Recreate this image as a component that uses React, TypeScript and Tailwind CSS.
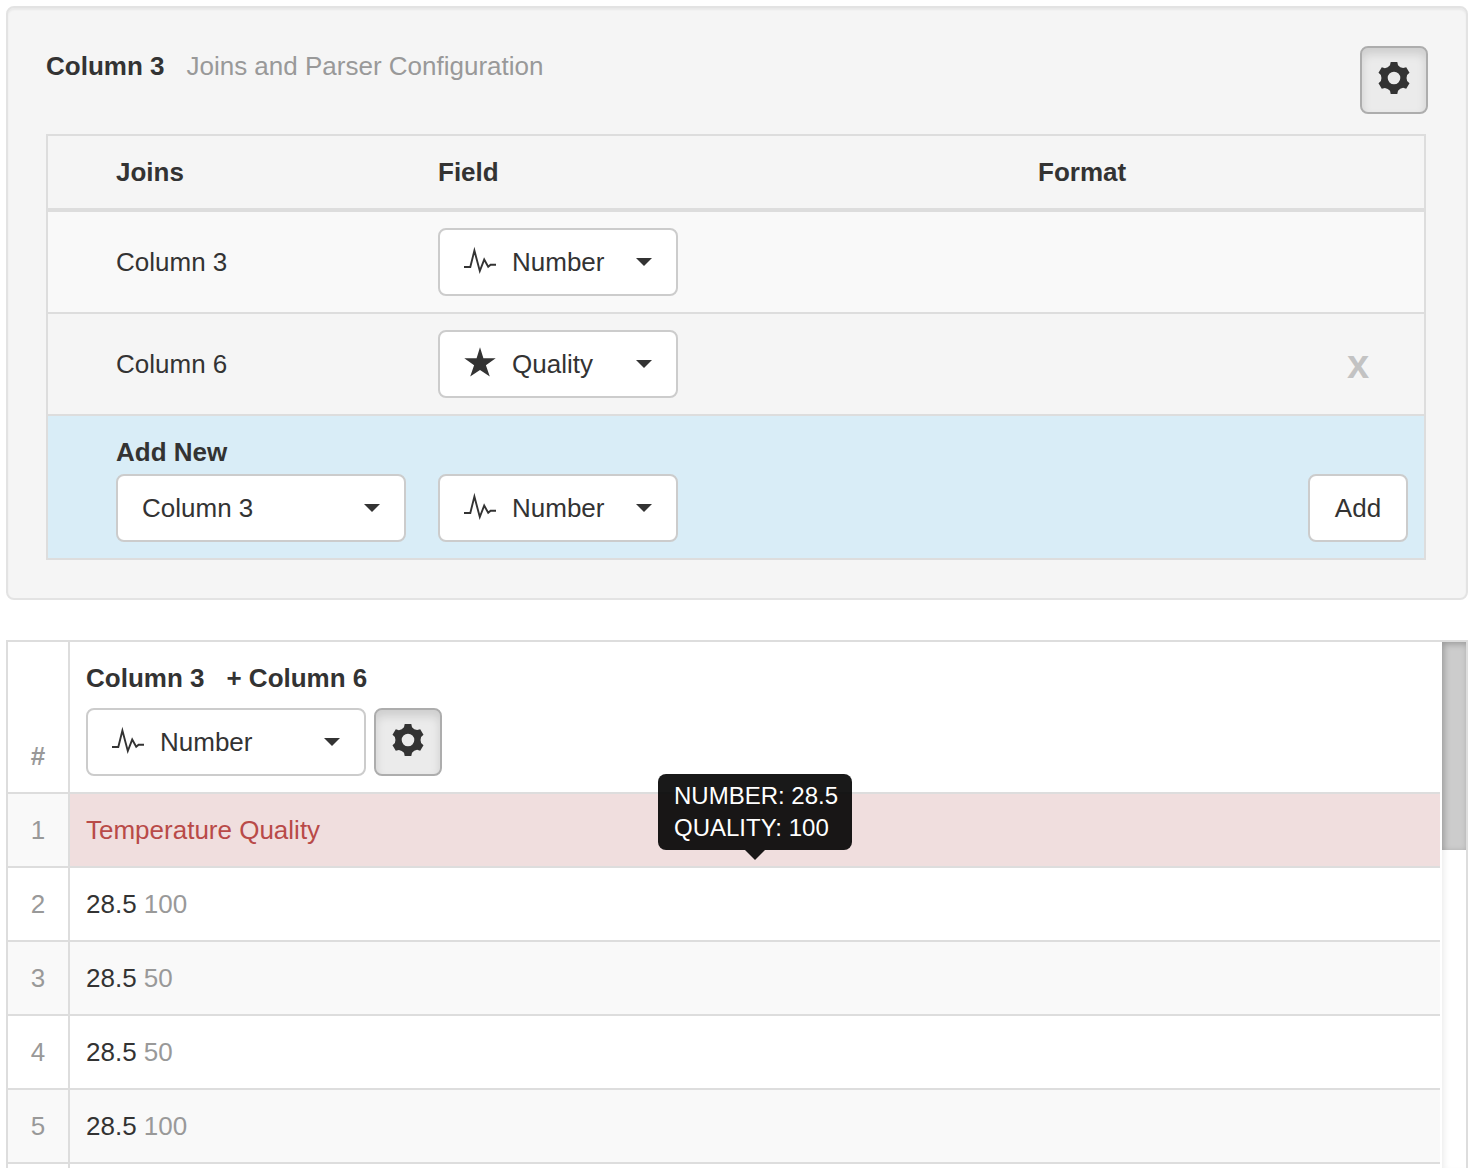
import React, { useId } from "react";

const TOOTH: [number, number][] = [
  [-3.3, -16],
  [3.3, -16],
  [4, -12.8],
  [6, -10.4],
  [9.1, -9.9],
];

function gearPath() {
  const parts: string[] = [];
  for (let i = 0; i < 6; i++) {
    const a = (i * Math.PI) / 3;
    const p = TOOTH.map(([x, y]) => {
      const px = 16 + x * Math.cos(a) - y * Math.sin(a);
      const py = 16 + x * Math.sin(a) + y * Math.cos(a);
      return `${px.toFixed(2)} ${py.toFixed(2)}`;
    });
    parts.push(`${i === 0 ? "M" : "L"}${p[0]}L${p[1]}L${p[2]}Q${p[3]} ${p[4]}`);
  }
  return parts.join("") + "ZM16 9.7a6.3 6.3 0 1 0 0 12.6a6.3 6.3 0 1 0 0-12.6Z";
}

const GEAR = gearPath();

function GearButton({ label }: { label: string }) {
  return (
    <button
      type="button"
      aria-label={label}
      aria-pressed="true"
      className="flex h-[68px] w-[68px] shrink-0 items-center justify-center rounded-lg border-2 border-[#adadad] bg-[#ebebeb] pb-1 shadow-[inset_0_6px_10px_rgba(0,0,0,0.125)]"
    >
      <svg viewBox="0 0 32 32" className="h-8 w-8" fill="#333" fillRule="evenodd" aria-hidden="true">
        <path d={GEAR} />
      </svg>
    </button>
  );
}

function PulseIcon() {
  return (
    <svg
      viewBox="0 0 32 32"
      className="h-8 w-8"
      fill="none"
      stroke="#333"
      strokeWidth="1.9"
      strokeMiterlimit="10"
      aria-hidden="true"
    >
      <path d="M0 21H6.3L10.4 4.6L15.8 25L20.2 13.6L24.2 20.8L26.6 18.7H32" />
    </svg>
  );
}

function StarIcon() {
  return (
    <svg viewBox="0 0 32 32" className="h-8 w-8 overflow-visible" fill="#333" aria-hidden="true">
      <path d="M16 -0.8L19.4 10.3H31.7L21.9 17.3L25.8 28.6L16 21.9L6.2 28.6L10.1 17.3L0.3 10.3H12.6Z" />
    </svg>
  );
}

type Kind = "Number" | "Quality";

function Caret() {
  return (
    <svg
      viewBox="0 0 16 8"
      className="pointer-events-none absolute top-1/2 right-[26px] h-2 w-4 -translate-y-1/2"
      fill="#333"
      aria-hidden="true"
    >
      <path d="M0 0H16L8 8Z" />
    </svg>
  );
}

function FieldSelect({ kind, label, wide = false }: { kind: Kind; label: string; wide?: boolean }) {
  return (
    <div className={wide ? "relative w-[280px]" : "relative w-[240px]"}>
      <select
        aria-label={label}
        defaultValue={kind}
        className="block h-[68px] w-full appearance-none rounded-lg border-2 border-[#ccc] bg-white pr-12 pl-[72px] text-[#333]"
      >
        <option>Number</option>
        <option>Quality</option>
      </select>
      <span className="pointer-events-none absolute top-1/2 left-[26px] -translate-y-1/2">
        {kind === "Number" ? <PulseIcon /> : <StarIcon />}
      </span>
      <Caret />
    </div>
  );
}

function JoinsPanel() {
  const id = useId();
  return (
    <section className="rounded-lg border-2 border-[#e3e3e3] bg-[#f5f5f5] p-[38px] shadow-[inset_0_2px_2px_rgba(0,0,0,0.05)]">
      <header className="mb-5 flex items-start justify-between">
        <h1 className="font-bold">
          Column 3<span className="ml-[22px] font-normal text-[#999]">Joins and Parser Configuration</span>
        </h1>
        <GearButton label="Column settings" />
      </header>
      <div className="pr-0.5">
        <table className="w-full table-fixed border-separate border-spacing-0 border-2 border-[#ddd] text-left">
          <colgroup>
            <col className="w-[374px]" />
            <col className="w-[600px]" />
            <col />
            <col className="w-[132px]" />
          </colgroup>
          <thead>
            <tr>
              <th className="border-b-4 border-[#ddd] py-4 pr-4 pl-[68px]">Joins</th>
              <th className="border-b-4 border-[#ddd] p-4">Field</th>
              <th className="border-b-4 border-[#ddd] p-4">Format</th>
              <td className="border-b-4 border-[#ddd]" />
            </tr>
          </thead>
          <tbody>
            <tr className="bg-[#f9f9f9]">
              <td className="border-b-2 border-[#ddd] py-4 pr-4 pl-[68px]">Column 3</td>
              <td className="border-b-2 border-[#ddd] p-4">
                <FieldSelect kind="Number" label="Field for Column 3" />
              </td>
              <td className="border-b-2 border-[#ddd]" />
              <td className="border-b-2 border-[#ddd]" />
            </tr>
            <tr>
              <td className="border-b-2 border-[#ddd] py-4 pr-4 pl-[68px]">Column 6</td>
              <td className="border-b-2 border-[#ddd] p-4">
                <FieldSelect kind="Quality" label="Field for Column 6" />
              </td>
              <td className="border-b-2 border-[#ddd]" />
              <td className="border-b-2 border-[#ddd] px-4 pt-1 text-center">
                <button
                  type="button"
                  aria-label="Remove Column 6"
                  className="text-[40px] leading-10 font-bold text-black opacity-20 [text-shadow:0_2px_0_#fff]"
                >
                  x
                </button>
              </td>
            </tr>
            <tr className="bg-[#d9edf7] align-bottom">
              <td className="py-4 pr-4 pl-[68px]">
                <label htmlFor={id} className="mb-0.5 block font-bold">
                  Add New
                </label>
                <div className="relative w-[290px]">
                  <select
                    id={id}
                    defaultValue="Column 3"
                    className="block h-[68px] w-full appearance-none rounded-lg border-2 border-[#ccc] bg-white pr-12 pl-6 text-[#333]"
                  >
                    <option>Column 3</option>
                    <option>Column 6</option>
                  </select>
                  <Caret />
                </div>
              </td>
              <td className="p-4">
                <FieldSelect kind="Number" label="Field for new join" />
              </td>
              <td />
              <td className="p-4">
                <button type="button" className="block h-[68px] w-full rounded-lg border-2 border-[#ccc] bg-white">
                  Add
                </button>
              </td>
            </tr>
          </tbody>
        </table>
      </div>
    </section>
  );
}

const ROWS = [
  { value: "28.5", quality: "100", tip: true },
  { value: "28.5", quality: "50" },
  { value: "28.5", quality: "50" },
  { value: "28.5", quality: "100" },
];

function Tooltip() {
  return (
    <div
      role="tooltip"
      className="absolute bottom-full left-1/2 mb-[18px] w-[194px] -translate-x-1/2 rounded-lg bg-black/90 px-4 py-1.5 text-2xl leading-8 whitespace-nowrap text-white"
    >
      NUMBER: 28.5
      <br />
      QUALITY: 100
      <svg
        viewBox="0 0 20 10"
        className="absolute top-full left-1/2 h-2.5 w-5 -translate-x-1/2"
        fill="#000"
        fillOpacity="0.9"
        aria-hidden="true"
      >
        <path d="M0 0H20L10 10Z" />
      </svg>
    </div>
  );
}

function DataTable() {
  return (
    <section className="mt-10 flex min-h-0 flex-1 overflow-hidden border-2 border-b-0 border-[#ddd]">
      <div className="min-w-0 flex-1">
        <table className="w-full table-fixed border-separate border-spacing-0 text-left">
          <colgroup>
            <col className="w-[62px]" />
            <col />
          </colgroup>
          <thead>
            <tr>
              <th className="border-r-2 border-b-2 border-[#ddd] py-4 text-center align-bottom text-[#999]">#</th>
              <th className="border-b-2 border-[#ddd] p-4">
                <div className="mb-2.5">
                  Column 3<span className="ml-[22px]">+ Column 6</span>
                </div>
                <div className="flex gap-2 font-normal">
                  <FieldSelect kind="Number" label="Column 3 field" wide />
                  <GearButton label="Column 3 settings" />
                </div>
              </th>
            </tr>
          </thead>
          <tbody>
            <tr>
              <td className="border-r-2 border-b-2 border-[#ddd] bg-[#f9f9f9] py-4 text-center text-[#999]">1</td>
              <td className="border-b-2 border-[#ddd] bg-[#f0dede] p-4 text-[#b94a48]">Temperature Quality</td>
            </tr>
            {ROWS.map((row, i) => (
              <tr key={i} className="even:bg-white odd:bg-[#f9f9f9]">
                <td className="border-r-2 border-b-2 border-[#ddd] py-4 text-center text-[#999]">{i + 2}</td>
                <td className="relative border-b-2 border-[#ddd] p-4">
                  {row.value} <span className="text-[#999]">{row.quality}</span>
                  {row.tip && <Tooltip />}
                </td>
              </tr>
            ))}
            <tr>
              <td className="h-10 border-r-2 border-[#ddd]" />
              <td />
            </tr>
          </tbody>
        </table>
      </div>
      <div className="ml-0.5 w-6 shrink-0 bg-white shadow-[inset_6px_0_6px_-4px_rgba(0,0,0,0.08)]">
        <div className="h-52 bg-[#ccc] shadow-[inset_2px_2px_6px_rgba(0,0,0,0.25)]" />
      </div>
    </section>
  );
}

export default function App() {
  return (
    <main className="flex h-screen flex-col overflow-hidden bg-white px-1.5 pt-1.5 font-['Liberation_Sans',Arial,sans-serif] text-[26px] leading-10 text-[#333]">
      <JoinsPanel />
      <DataTable />
    </main>
  );
}
